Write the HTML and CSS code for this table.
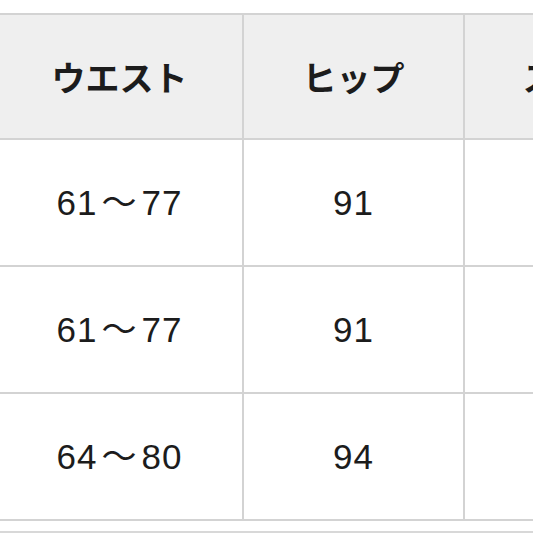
FILE: index.html
```
<!DOCTYPE html>
<html lang="ja">
<head>
<meta charset="utf-8">
<link rel="stylesheet" href="styles.css">
</head>
<body>
<div class="wrap">
<table class="size">
<colgroup><col class="c1"><col class="c2"><col class="c3"></colgroup>
<thead>
<tr><th>ウエスト</th><th>ヒップ</th><th>スソ幅</th></tr>
</thead>
<tbody>
<tr><td>61<span class="tilde">～</span>77</td><td>91</td><td></td></tr>
<tr><td>61<span class="tilde">～</span>77</td><td>91</td><td></td></tr>
<tr><td>64<span class="tilde">～</span>80</td><td>94</td><td></td></tr>
</tbody>
</table>
<div class="below"></div>
</div>
</body>
</html>
```
FILE: styles.css
```
html, body {
  margin: 0;
  padding: 0;
  background: #ffffff;
  overflow: hidden;
}
.wrap {
  width: 533px;
  height: 533px;
  overflow: hidden;
  padding-top: 13px;
  box-sizing: border-box;
}
.size {
  border-collapse: collapse;
  margin-left: -5px;
  width: 687px;
  table-layout: fixed;
  font-family: "Noto Sans CJK JP", "Noto Sans", sans-serif;
  color: #1c1c1c;
}
.c1 { width: 247px; }
.c2 { width: 221px; }
.c3 { width: 219px; }
.size th, .size td {
  border: 2px solid #d3d3d3;
  text-align: center;
  vertical-align: middle;
  padding: 0;
  white-space: nowrap;
}
.size th {
  background: #efefef;
  font-weight: 700;
  font-size: 34px;
  height: 123px;
}
.size td {
  background: #ffffff;
  font-family: "Liberation Sans", "Noto Sans CJK JP", sans-serif;
  font-weight: 400;
  font-size: 35px;
  line-height: 40px;
  letter-spacing: 1px;
  height: 125px;
}
.tilde {
  margin: 0 4px;
  line-height: 40px;
  vertical-align: baseline;
}
.below {
  margin-top: 10px;
  border-top: 2px solid #d8d8d8;
  width: 540px;
}
```
